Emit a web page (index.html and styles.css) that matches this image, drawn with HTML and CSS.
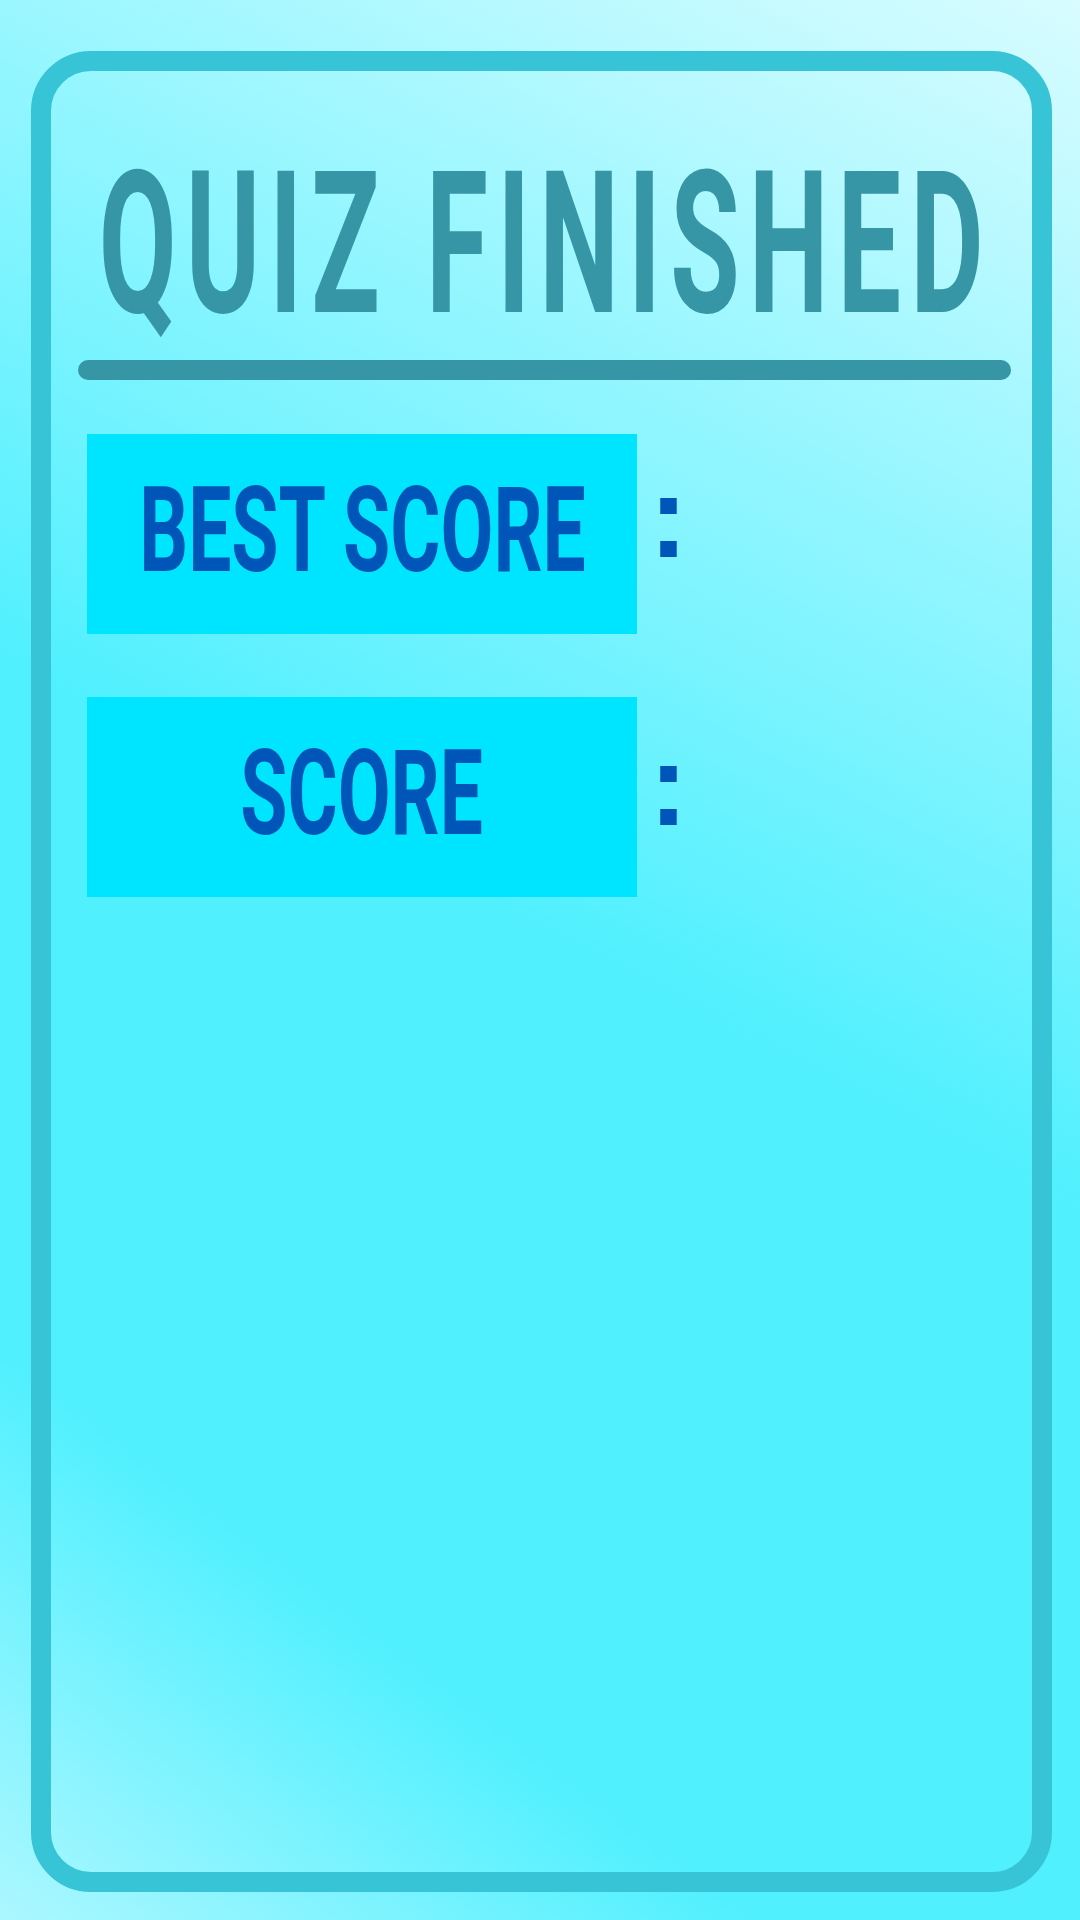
FILE: index.html
```html
<!DOCTYPE html>
<html lang="en">
<head>
  <meta charset="UTF-8" />
  <meta name="viewport" content="width=device-width, initial-scale=1.0"/>
  <title>Quiz Finished</title>
  <link rel="stylesheet" href="styles.css">
</head>
<body>
  <div class="card">
    <h1 class="title"><span>QUIZ FINISHED</span></h1>
    <div class="rule"></div>

    <div class="score-row">
      <div class="score-box"><span>BEST SCORE</span></div>
      <span class="colon">:</span>
    </div>

    <div class="score-row">
      <div class="score-box"><span>SCORE</span></div>
      <span class="colon">:</span>
    </div>
  </div>
</body>
</html>
```

FILE: styles.css
```css
/* Page background */
html, body {
  height: 100%;
}

body {
  margin: 0;
  padding: 51px 28px 28px 31px;
  box-sizing: border-box;
  font-family: Roboto, "Liberation Sans", sans-serif;
  background:
    linear-gradient(217deg, rgba(172, 247, 255, 0) 0%, rgba(172, 247, 255, 0) 79%, #acf7ff 100%),
    linear-gradient(207deg, #d8fcff 0%, #50f0ff 49%, #50f0ff 100%);
}

/* Outlined card */
.card {
  height: 100%;
  box-sizing: border-box;
  border: 20px solid #37c4d6;
  border-radius: 60px;
  display: flex;
  flex-direction: column;
  overflow: hidden;
}

/* Heading */
.title {
  display: flex;
  justify-content: center;
  margin: 74px 0 0 0;
  font-size: 198px;
  font-weight: 700;
  line-height: 1;
  letter-spacing: 16px;
  color: #3796a6;
  white-space: nowrap;
}

.title span {
  flex: none;
  padding-left: 16px;
  transform: scaleX(0.57);
}

.rule {
  height: 20px;
  margin: 17px 21px 0 27px;
  border-radius: 10px;
  background-color: #3796a6;
}

/* Score rows */
.score-row {
  display: flex;
  margin: 54px 0 0 36px;
}

.score-row + .score-row {
  margin-top: 63px;
}

.score-box {
  width: 550px;
  height: 200px;
  box-sizing: border-box;
  padding-top: 38px;
  background-color: #00e5ff;
  display: flex;
  justify-content: center;
  font-size: 118px;
  font-weight: 700;
  line-height: 1;
  color: #0055b8;
  white-space: nowrap;
}

.score-box span {
  display: inline-block;
  transform: scaleX(0.65);
}

.colon {
  margin: 24px 0 0 12px;
  font-family: "Liberation Sans", Arial, sans-serif;
  font-size: 117px;
  font-weight: 700;
  line-height: 1;
  color: #0055b8;
}

.score-row + .score-row .colon {
  margin-top: 29px;
}
```
